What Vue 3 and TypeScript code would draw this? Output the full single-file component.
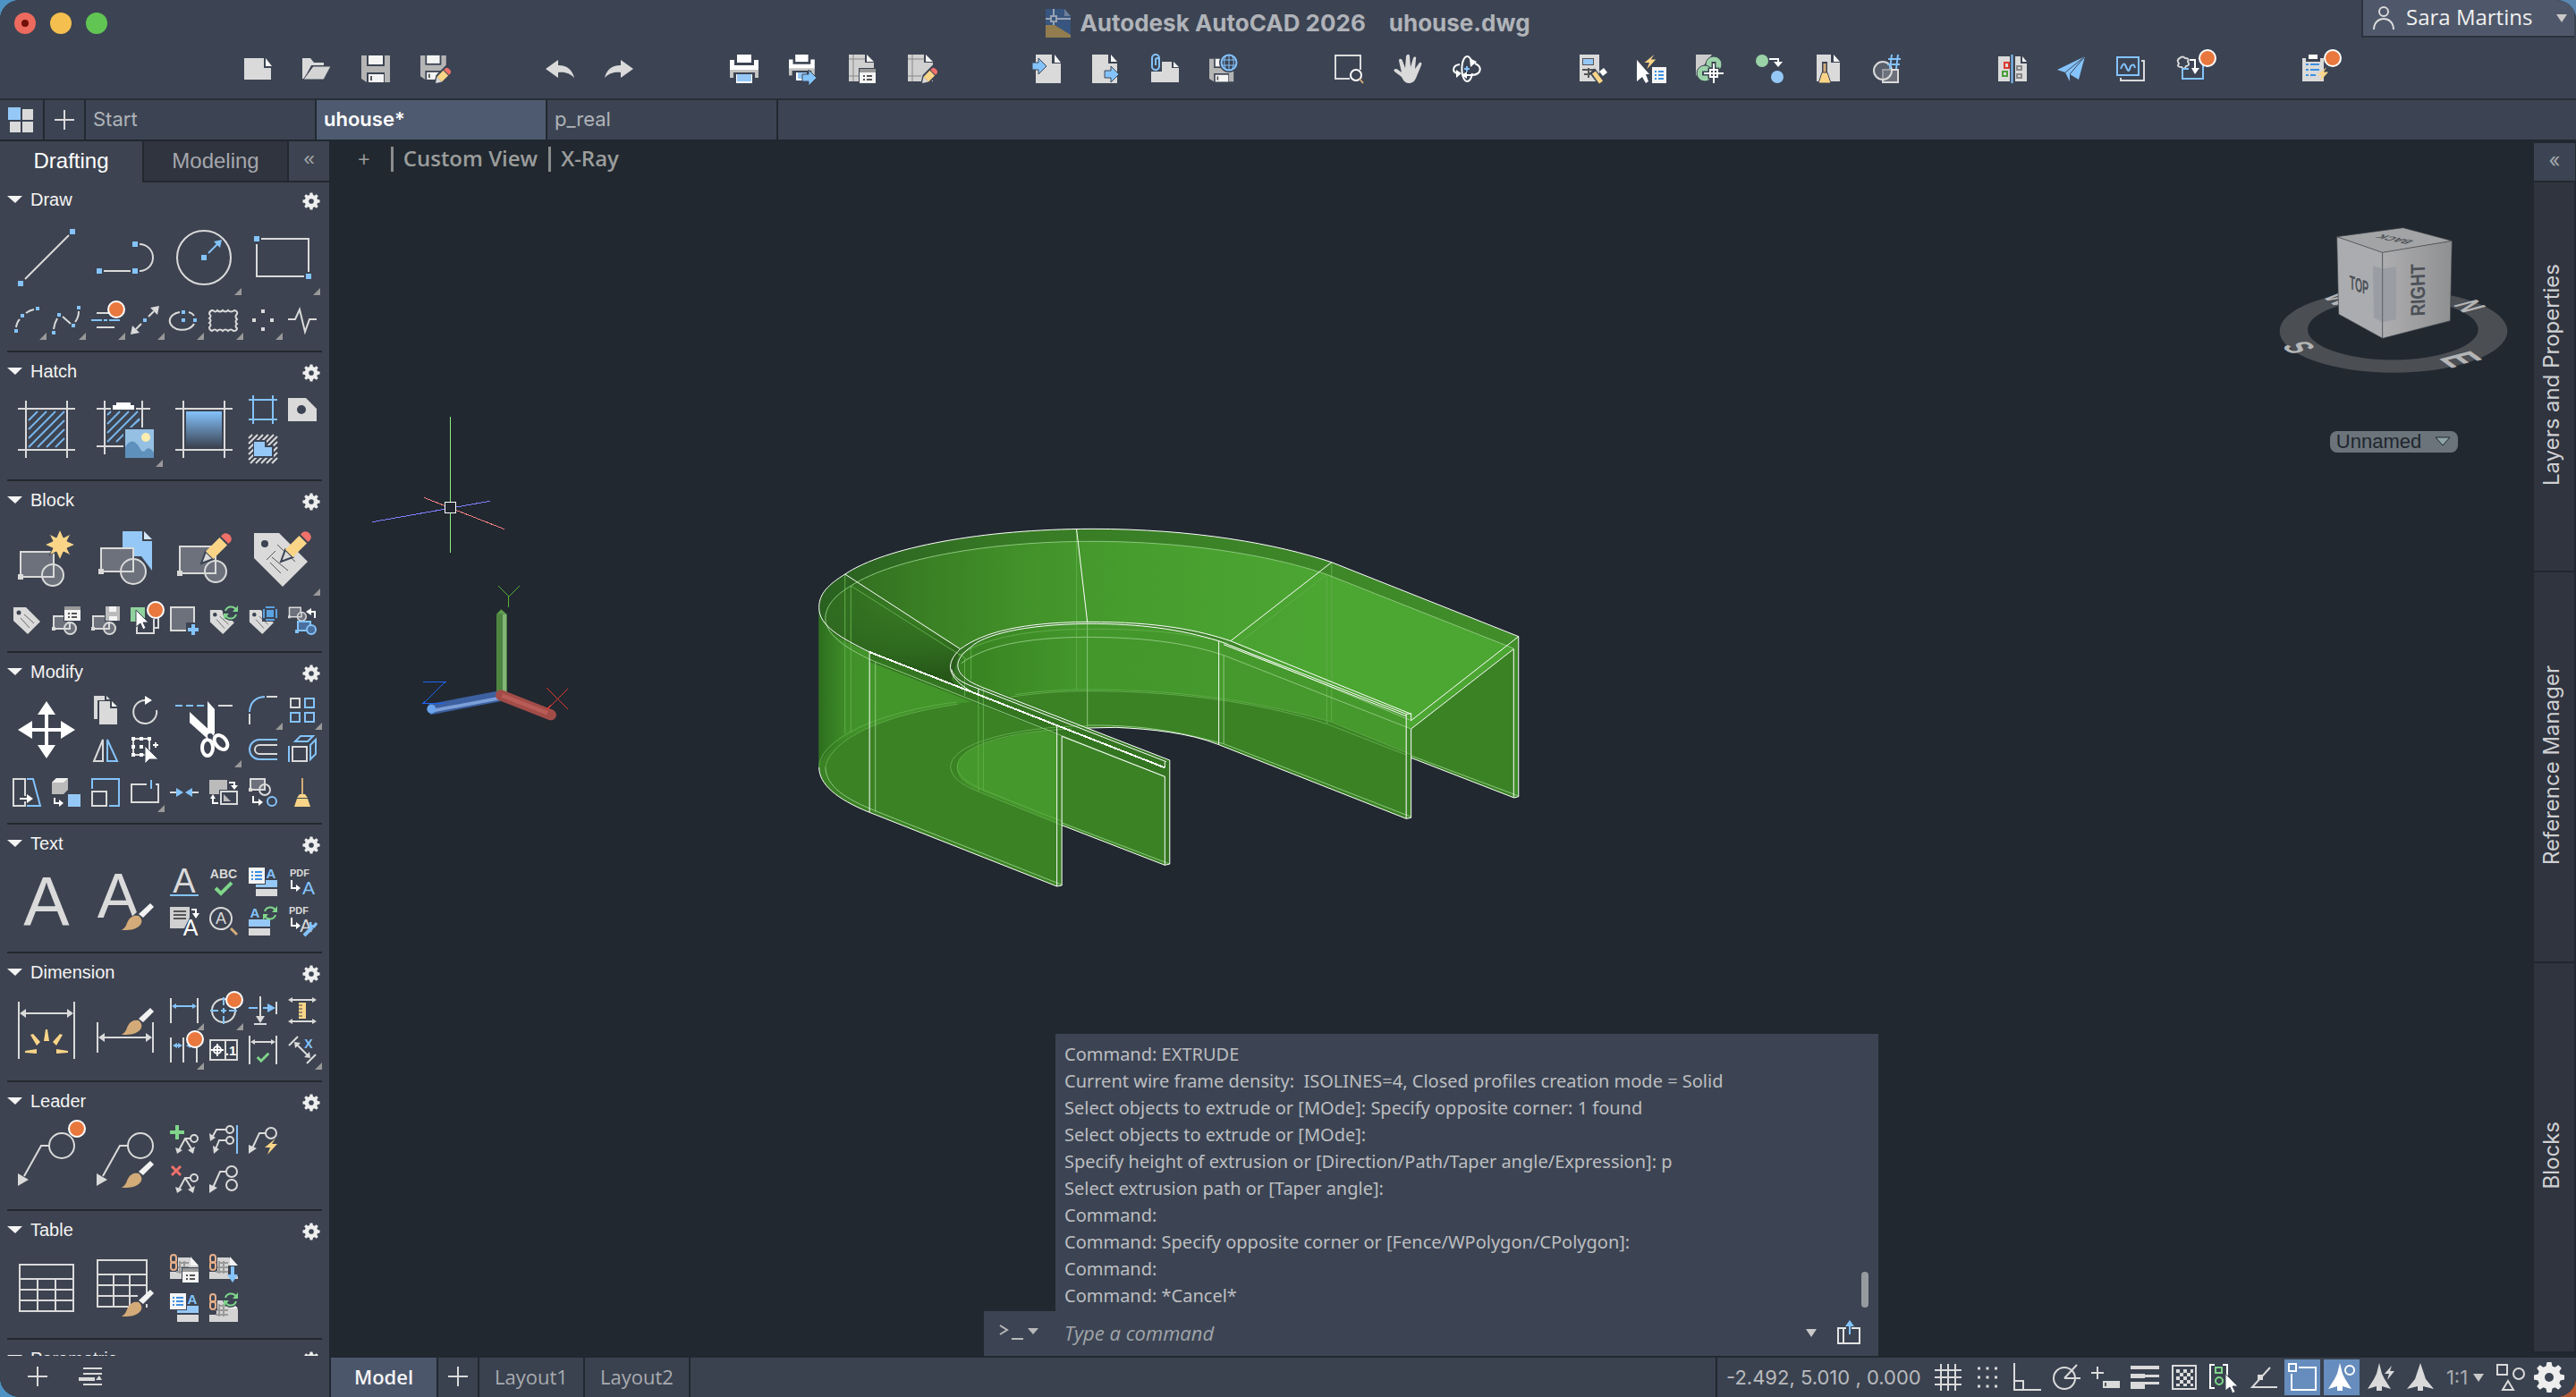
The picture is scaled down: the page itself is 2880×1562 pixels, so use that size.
<script setup lang="ts">
import { ref } from 'vue'

interface Tool { id: string; label: string; big?: boolean; menu?: boolean }
interface Section { title: string; rows: Tool[][] }

const G = '#dadada'
const B = '#84c3fc'
const W = '#ffffff'
const Y = '#fad588'
const R = '#f0716a'
const E = '#7fd68a'
const D = '#3c4453'
const F = '#6d717c'

/* Shared fragments */
const ln = (d: string, c = G, w = 2, extra = '') => `<path d="${d}" fill="none" stroke="${c}" stroke-width="${w}" ${extra}/>`
const sh = (d: string, c = G, extra = '') => `<path d="${d}" fill="${c}" ${extra}/>`
const bx = (x: number, y: number, w: number, h: number, c = G) => `<rect x="${x}" y="${y}" width="${w}" height="${h}" fill="${c}"/>`
const ob = (x: number, y: number, w: number, h: number, c = G, f = 'none', s = 2) => `<rect x="${x}" y="${y}" width="${w}" height="${h}" fill="${f}" stroke="${c}" stroke-width="${s}"/>`
const ci = (x: number, y: number, r: number, c = G, f = 'none', s = 2) => `<circle cx="${x}" cy="${y}" r="${r}" fill="${f}" stroke="${c}" stroke-width="${s}"/>`
const tx = (s: string, x: number, y: number, size: number, c = G, weight = 400) => `<text x="${x}" y="${y}" font-family="Liberation Sans, sans-serif" font-size="${size}" font-weight="${weight}" text-anchor="middle" fill="${c}">${s}</text>`
const at = (x: number, y: number, s: string, more = '') => `<g transform="translate(${x} ${y}) ${more}">${s}</g>`
const dot = (x = 28, y = 4) => ci(x, y, 9, W, '#e9783f', 2)

const brush = sh('M60 34l4 4l-12 12l-5-4z', '#f2f2f2') + sh('M28 64C34 60 33 57 35 54C38 48 43 47 47 48C52 52 51 57 47 60C42 64 36 64 28 64z', '#d3ab78')
const pencil = `<g transform="rotate(45)"><path d="M0 0L-6 -13H6z" fill="#dadada" stroke="${D}" stroke-width="2"/><rect x="-6" y="-35" width="12" height="22" fill="${Y}"/><path d="M-6 -37V-40a6 5 0 0 1 12 0V-37z" fill="${R}"/></g>`
const pencilS = `<g transform="rotate(45)"><path d="M0 1L-5 -7V-22H5V-7z" fill="${D}" stroke="${D}" stroke-width="2"/><path d="M0 0L-4 -6H4z" fill="#dadada"/><rect x="-4" y="-16" width="8" height="10" fill="${Y}"/><path d="M-4 -17V-19a4 3 0 0 1 8 0V-17z" fill="${R}"/></g>`
const cursor = sh('M0 0V19L5 15L8 22L11 20L8 14H14z', W, `stroke="${D}" stroke-width="1"`)
const refresh = ln('M-6 -2A6.500 6.500 0 0 1 6 -3M6 2A6.500 6.500 0 0 1 -6 3', E, 2) + sh('M8 -8V-1H2zM-8 8V1H-2z', E)
const list = (w: number, h: number) => bx(0, 0, w, h, '#f4f4f4') + ln(`M3 5H5M7 5H${w - 3}M3 9H5M7 9H${w - 3}M3 13H5M7 13H${w - 3}`, '#3d8fe0')
const win = bx(-1, -1, 20, 18, D) + bx(0, 0, 18, 16, '#f4f4f4') + bx(0, 0, 18, 4, '#999') + ln('M4 8H6M8 8H14M4 12H6M8 12H14', '#555')
const floppy = bx(0, 0, 16, 16, '#bbb') + bx(4, 0, 8, 6, '#f4f4f4') + bx(4, 11, 9, 5, '#f4f4f4')
const check = ln('M-9 0L-3 6L9 -6', E, 4)
const bolt = sh('M6 0L-6 10H0L-3 18L8 6H2z', Y)
const blk = ob(2, 11, 17, 14, G, F) + bx(0, 23, 4, 4) + ci(20.5, 24.5, 6.500, G, F) + ln('M15 25H20V18')
const tag = sh('M1 1H15L31 17L17 31L1 16z') + `<circle cx="7" cy="7" r="2.500" fill="${D}"/>` + ln('M9 13L19 24M13 9L24 19', '#666', 1)
const ha = (x1: number, x2: number, y: number, c = G, k = 4) => ln(`M${x1 + k} ${y}H${x2 - k}`, c) + sh(`M${x1} ${y}l${k + 2} -${k}v${2 * k}zM${x2} ${y}l-${k + 2} -${k}v${2 * k}z`, c)
const diag = (cs: number[], lo: number, hi: number) => cs.map(c => (c <= lo + hi ? `M${lo} ${c - lo}L${c - lo} ${lo}` : `M${c - hi} ${hi}L${hi} ${c - hi}`)).join('')
const frame = ln('M9 0V64M55 0V64M0 9H64M0 55H64')
const printer = bx(8, 0, 16, 9, W) + sh('M0 6H5V12H27V6H32V18H0z', W) + bx(0, 17, 32, 9, '#c4c4c4') + bx(4, 20, 24, 7, D)
const arrowR = (c = B) => sh('M0 4H7V-1L16 8L7 17V12H0z', c, `stroke="${D}" stroke-width="1"`)
const save = sh('M0 1H32V31H6L0 27z', '#b5b5b5') + bx(6, 1, 20, 12, D) + bx(8, 1, 16, 10, '#f4f4f4') + bx(6, 20, 20, 11, D) + bx(8, 22, 17, 9, '#f4f4f4') + bx(10, 24, 2, 5, '#555')
const plot = sh('M1 0H19V9H29V30H1z', '#d0d0d0') + sh('M21 0L29 8H21z', '#f4f4f4') + ln('M1 5H19M6 0V30M1 24H16', '#888', 1)
const chain = `<rect x="1" y="1" width="6" height="9" rx="3" fill="none" stroke="#e8b08a" stroke-width="2"/><rect x="1" y="9" width="6" height="9" rx="3" fill="none" stroke="#e8b08a" stroke-width="2"/>`
const sheet = sh('M0 20H8V4H22L32 14V28H0z', '#d4d4d4') + sh('M23 3L32 13H23z', '#f4f4f4') + ln('M11 10H21M7 15H21M7 20H21M11 8V22M16 8V22', '#999', 2)
const leader = ci(49, 17, 14) + ln('M35 17H26L7 51') + sh('M0 48L12 55L0 62z')
const twoLead = ci(27, 15, 4) + ln('M23 15H17L10 28M17 15L25 28') + sh('M6 25L8 32L14 28zM28 24L26 32L20 28z')
const style = bx(8, 14, 24, 8, '#95c8f6') + bx(8, 24, 24, 8)
const compass = 'M16 0L20 12L22 18L31 29L19 26V31H13V26L1 29L10 18L12 12z'
const gearPath = 'M13.500 1h5l1 4.500 3 1.200 3.800-2.500 3.500 3.500-2.500 3.800 1.200 3 4.500 1v5l-4.500 1-1.200 3 2.500 3.800-3.500 3.500-3.800-2.500-3 1.200-1 4.500h-5l-1-4.500-3-1.200-3.800 2.500-3.500-3.500 2.500-3.800-1.200-3-4.500-1v-5l4.500-1 1.200-3-2.500-3.800 3.500-3.500 3.800 2.500 3-1.200z'
const gear = `<g transform="translate(0 -2)"><path d="${gearPath}" fill="#eee"/><circle cx="16" cy="18" r="5" fill="${D}"/></g>`

const icons: Record<string, string> = {
  /* quick access */
  new: sh('M1 4H23V15H31V28H1z') + sh('M25 4L32 13H25z', '#f4f4f4'),
  open: sh('M0 4H9L13 9H24V12H10L2 27H0z') + sh('M12 13H32L24 28H1z', '#d4d4d4', `stroke="${D}"`),
  save, saveas: at(0, 0, save, 'scale(.900)') + at(17, 32, pencilS),
  undo: sh('M0 16L14 6V12C25 12 30 18 32 26C27 21 22 19 14 20V26z'),
  redo: sh('M32 16L18 6V12C7 12 2 18 0 26C5 21 10 19 18 20V26z'),
  print: printer + bx(7, 22, 18, 10, W) + bx(8, 22, 16, 8, '#95c8f6'),
  batch: at(0, 0, printer, 'scale(.900)') + bx(8, 20, 12, 9, W) + bx(10, 20, 10, 7, '#95c8f6') + at(15, 18, arrowR()),
  plotset: plot + at(13, 16, win), plotedit: plot + at(17, 32, pencilS),
  import: sh('M4 0H22V10H32V32H4z') + sh('M25 0L32 9H25z', '#f4f4f4') + at(0, 5, arrowR()),
  export: sh('M1 0H19V10H29V32H1z') + sh('M22 0L29 8H22z', '#f4f4f4') + at(15, 14, arrowR()),
  attach: sh('M1 14H13V8H24V15H32V31H1z') + sh('M26 8L32 14H26z', '#f4f4f4') + bx(0, 0, 13, 19, D) + ln('M10 7V4A4 4 0 0 0 2 4V12A4 4 0 0 0 10 14M10 14V6A2 2 0 0 0 6 6V12', B),
  saveweb: at(0, 4, save, 'scale(.850)') + `<circle cx="22" cy="9" r="11" fill="${D}"/>` + ci(22, 9, 8.500, B, 'none', 2) + ln('M22 0V18M14 6H30M14 12H30M19 1C16 6 16 12 19 17M25 1C28 6 28 12 25 17', B, 1),
  zoomwin: ln('M17 27H1V1H29V17') + ci(24, 23, 6, W) + ln('M28 27L32 32', '#d3ab78'),
  pan: sh('M9 25L1 19C-1 16 3 15 5 17L9 20L6 7C6 4 9 4 10 7L13 15L14 2C15 -1 18 -1 18 2L19 14L22 4C23 2 26 2 25 5L24 16L29 9C31 8 32 10 31 12L26 24C24 30 21 32 17 32C13 32 11 29 9 25z'),
  orbit: ln('M22 11A6 14 0 1 0 22 21', W) + ln('M8 11C0 12 -1 19 5 21M25 10C33 13 33 22 22 23H14', W) + sh('M19 4L27 8L20 14zM4 17L10 21L4 26zM16 19L10 23L16 27z', W) + ln('M16 13V19M13 16H19', B, 2),
  adcenter: bx(2, 0, 22, 30) + bx(5, 4, 13, 8, '#555') + bx(6, 5, 11, 6, '#95c8f6') + ln('M5 17H19M12 15V26M7 22H14', '#555') + at(16, 15, ln('M0 3L10 16', '#3c4453', 8) + ln('M2 5L10 16', Y, 5) + sh('M8 4L13 0L17 5L12 9z', W)),
  quick: sh('M0 6V30L6 25L10 32L13 30L10 22H14z', W) + at(17, 14, list(16, 18)) + at(14, 0, bolt, 'scale(.900)'),
  count: sh('M0 0H18L0 24z', '#ccc') + `<circle cx="20" cy="11" r="9" fill="#9bd3a8" stroke="${D}"/><circle cx="10" cy="21" r="9" fill="#9bd3a8" stroke="${D}"/>` + ob(16, 17, 8, 8, D, 'none', 5) + ln('M20 8V34M7 21H33', D, 5) + ob(16, 17, 8, 8, W) + ln('M20 10V32M9 21H31', W),
  replace: `<circle cx="8" cy="7" r="7" fill="#9bd3a8"/><circle cx="25" cy="25" r="7" fill="#95c8f6"/>` + ln('M16 5H26V9', W) + sh('M21 8H31L26 14z', W),
  purge: sh('M3 0H19V9H29V30H3z') + sh('M22 0L29 8H22z', '#f4f4f4') + ln('M12 8V24', '#3c4453', 6) + ln('M12 10V22', '#d3ab78', 3) + sh('M9 20H15L19 32H5z', Y, `stroke="${D}"`),
  hash: ob(11, 17, 17, 14, G, F) + ci(11, 18, 10, G, 'rgba(109,113,124,.6)') + ln('M21 0L19 16M28 0L26 16M17 5H31M16 11H30', B),
  compare: sh('M0 2H13V30H0z') + sh('M19 2H25V10H32V30H19z') + sh('M27 2L32 8H27z', '#f4f4f4') + ln('M15.500 0V32', B) + ob(7, 9, 5, 6, '#e03a30') + ob(5, 19, 5, 5, '#49a03a') + ob(21, 13, 5, 4, '#888') + ob(21, 22, 5, 4, '#888'),
  share: sh('M0 17L31 2L24 28L14 22V30L9 20z', B) + ln('M31 2L9 20M31 2L14 22', D, 1),
  trace: ob(5, 7, 26, 22, G, D) + bx(0, 0, 28, 26, D) + ob(1, 3, 24, 20, B) + ln('M5 16C9 6 10 12 12 16S15 17 16 13Q20 9 21 15', B),
  markup: ln('M5 4Q8 1 11 4Q16 4 14 8Q17 12 12 13Q10 18 7 14Q1 14 4 10Q1 6 5 4z', G) + ln('M15 16H8V27H31V12', B) + ln('M16 6H22V17', W) + sh('M18 15H27L22 22z', W),
  task: bx(2, 4, 24, 26) + bx(6, 4, 16, 4, D) + bx(9, 0, 10, 5, W) + ln('M6 11H9M11 11H21M6 17H9M11 17H21M6 23H9M11 23H17', '#3d8fe0') + at(24, 14, bolt, 'scale(.900)'),
  /* draw */
  line: bx(0, 58, 6, 6, B) + bx(58, 0, 6, 6, B) + ln('M8 56L57 7'),
  pline: bx(0, 44, 6, 6, B) + bx(40, 44, 6, 6, B) + bx(40, 14, 6, 6, B) + ln('M8 47H38M48 17a15 15 0 0 1 0 30'),
  circle: ci(32, 32, 30) + bx(29, 29, 6, 6, B) + ln('M37 27L47 17', B) + sh('M52 12L50 21L43 14z', B),
  rect: ln('M8 11H61V48M3 17V53H56') + bx(0, 8, 6, 6, B) + bx(58, 50, 6, 6, B),
  arc: ln('M4 24Q5 18 8 15M15 8Q19 5 24 4') + bx(26, 1, 4, 4, B) + bx(9, 9, 4, 4, B) + bx(2, 26, 4, 4, B),
  spline: ln('M2 26Q3 19 6 14M12 12L21 20M26 18Q30 13 30 6') + bx(0, 28, 4, 4, B) + bx(6, 8, 4, 4, B) + bx(22, 20, 4, 4, B) + bx(28, 0, 4, 4, B),
  mline: ln('M6 8H20M6 24H26') + ln('M0 16H12M14 16H18M20 16H32', B) + dot(),
  ray: ln('M20 12L26 6M12 20L6 26') + sh('M32 0L30 10L22 2zM0 32L2 22L10 30z') + bx(14, 14, 4, 4, B),
  ellipse: ln('M11 7A14 10 0 1 0 27 20M21 7Q25 8 27 11') + bx(13, 5, 4, 4, B) + bx(13, 14, 4, 4, B) + bx(26, 14, 4, 4, B),
  cloud: ln('M4 5q3 3 5 0q3 3 6 0q3 3 6 0q3 3 7 0q4 1 3 4q-3 3 0 6q-3 3 0 5q-3 3 0 5q0 3-4 3q-3-3-6 0q-3-3-6 0q-3-3-6 0q-3-3-6 0q-3-1-3-4q3-3 0-5q3-3 0-5q3-3 0-5q0-3 3-4z', G, 2),
  points: bx(14, 4, 4, 4) + bx(4, 14, 4, 4) + bx(24, 14, 4, 4) + bx(14, 24, 4, 4),
  zig: ln('M0 15H8L13 4L19 29L24 15H32'),
  /* hatch */
  hatch: frame + ln(diag([34, 44, 54, 64, 74, 84, 94], 12, 52), '#78b4ea'),
  hatchimg: ln('M9 0V60M51 0V30M0 9H16M44 9H60M0 51H30') + ln('M12 16L16 12M12 26L26 12M12 36L36 12M12 46L46 12M22 46L48 20M40 28L48 21', '#78b4ea') + sh('M18 10V5H22V2H38V5H42V10z', W) + bx(30, 30, 34, 34, D) + bx(32, 32, 32, 32, '#95c0e4') + `<circle cx="55" cy="41" r="5" fill="#fdeeb0"/>` + sh('M32 52C38 42 44 44 50 56L53 57C58 50 61 54 64 58V64H32z', '#5f91bd'),
  gradient: frame + `<defs><linearGradient id="gradTool" x2="0" y2="1"><stop stop-color="#84c3fc"/><stop offset="1" stop-color="#3c4453"/></linearGradient></defs><rect x="12" y="12" width="40" height="40" fill="url(#gradTool)"/>`,
  boundary: ln('M5 0V32M27 0V32M0 5H32M0 27H32', B),
  wipe: sh('M0 3H20L32 15V29H0z') + `<circle cx="15" cy="16" r="5" fill="${D}"/>`,
  super: ln(diag([4, 10, 16, 22, 28, 34, 40, 46, 52, 58], 0, 32), G, 2) + sh('M5 6H20V12H28V26H5z', D) + sh('M6 8H18V14H26V24H6z', '#95c8f6'),
  /* block */
  insert: ob(3, 25, 37, 28, G, F) + bx(0, 50, 6, 6) + ci(39, 51, 12, G, F) + ln('M40 38V53H27') + sh('M47 0L51 9L59 5L55 13L64 17L55 21L59 29L51 25L47 34L43 25L35 29L39 21L30 17L39 13L35 5L43 9z', Y, `stroke="${D}" stroke-width="1"`),
  create: sh('M29 2H51V13H62V46L50 30H29z', '#95c8f6') + sh('M53 2L62 11H53z', '#d5e9fb') + ob(5, 21, 36, 26, G, F) + bx(2, 44, 6, 6) + ci(41, 47, 14, G, F) + ln('M41 33V47H27'),
  edit: ob(5, 19, 40, 30, G, F) + bx(2, 46, 6, 6) + ci(45, 47, 12, G, F) + ln('M45 35V49H33') + at(29, 38, pencil),
  attr: sh('M0 4H28L60 36L32 64L0 32z') + `<circle cx="12" cy="16" r="4" fill="${D}"/>` + ln('M14 34L24 24M20 31L38 46M18 37L30 49M26 17L46 36', '#555', 1) + at(30, 36, pencil),
  tag, blist: blk + at(14, 0, win), bsave: blk + bx(15, 0, 17, 17, D) + at(16, 0, floppy),
  bpick: bx(0, 1, 16, 16, '#8fd39c') + ln('M7 17V30H26V14M26 24H31V12') + at(6, 4, cursor) + dot(),
  badd: ob(1, 1, 26, 26, G, F) + bx(18, 18, 14, 14, D) + ln('M26 20V32M20 26H32', B, 4),
  bsync: at(0, 3, tag, 'scale(.900)') + `<circle cx="24" cy="7" r="9" fill="${D}"/>` + at(24, 7, refresh),
  bframe: at(0, 3, tag, 'scale(.900)') + bx(15, 0, 17, 17, D) + bx(20, 4, 8, 8, '#5ba3e0') + ln('M17 3V13M31 3V13M19 1H29M19 15H29', '#5ba3e0'),
  bconv: at(0, -7, blk, 'scale(.750)') + ln('M22 6H30V13', W) + sh('M20 6L26 2V10z', W) + ob(11, 17, 14, 10, B, '#4a6f9c') + bx(8, 26, 4, 4, B) + ci(26, 26, 5, B, '#4a6f9c'),
  /* modify */
  move: ln('M32 8V56M8 32H56', W, 4) + sh('M32 0L42 15H22zM32 64L42 49H22zM0 32L16 22V42zM64 32L48 22V42z', W),
  copy: sh('M3 0H15V5H7V26H3z') + sh('M17 0L21 4H17z') + sh('M9 6H21V14H29V32H9z') + sh('M23 6L29 12H23z', '#f4f4f4'),
  rotate: ln('M16 5A13 13 0 1 0 29 16', G) + sh('M16 0L24 5L16 10z', W),
  mirror: ln('M13 5V29H3z') + ln('M18 5V29H29z', B),
  select: ob(3, 4, 18, 18, G) + bx(1, 2, 4, 4, W) + bx(10, 2, 4, 4, W) + bx(19, 2, 4, 4, W) + bx(1, 11, 4, 4, W) + bx(10, 11, 4, 4, W) + bx(1, 20, 4, 4, W) + bx(10, 20, 4, 4, W) + sh('M16 12V32L21 27H31z', W, `stroke="${D}"`) + ln('M28 8V14M25 11H31', W),
  trim: ln('M0 5H8M12 5H20M24 5H32', B) + ln('M48 5H64') + sh('M36 0L44 9V36L40 42L36 36z', W) + sh('M16 12V24L36 42L42 36z', W) + `<ellipse cx="36" cy="52" rx="6" ry="9" fill="none" stroke="#fff" stroke-width="4"/><ellipse cx="51" cy="46" rx="6" ry="9" transform="rotate(-40 51 46)" fill="none" stroke="#fff" stroke-width="4"/><circle cx="39" cy="39" r="3" fill="${D}"/>`,
  fillet: ln('M1 18Q2 2 18 1', B) + ln('M20 1H32M1 20V32'),
  array: ob(3, 3, 10, 10) + ob(19, 3, 10, 10, B) + ob(3, 19, 10, 10, B) + ob(19, 19, 10, 10, B),
  offset: ln('M32 5H12a11 11 0 0 0 0 22H32', B) + ln('M32 11H12a5 5 0 0 0 0 10H32'),
  presspull: ob(5, 13, 16, 16) + ln('M1 12V30', B) + ln('M8 7L14 1H28L22 7zM25 11L31 5V21L25 27z', B),
  stretch: ln('M14 20V1H1V31H14V26') + ln('M16 1H23L31 31H16', B) + ln('M8 23H18', W) + sh('M16 18L23 23L16 28z', W),
  scale3: sh('M0 5L5 0H18V13L13 18H0z', '#bbb') + sh('M0 5L5 0H18L13 5z', '#f0f0f0') + bx(18, 18, 14, 14, '#95c8f6') + ln('M3 22V28H9', W) + sh('M8 24L13 28L8 32z', W),
  scale: ln('M1 12V1H31V31H20', B) + ob(1, 15, 16, 16),
  break: ln('M18 7H1V27H31V7H28') + ln('M23 2V12', B),
  join: ln('M0 16H7M25 16H32') + sh('M7 11L15 16L7 21zM25 11L17 16L25 21z', B),
  order: bx(0, 2, 20, 16, '#bbb') + bx(11, 13, 21, 18, D) + ob(13, 15, 18, 14) + sh('M16 18L24 26H16z', '#bbb') + ln('M22 5H28V9M4 22V28H10', W) + sh('M24 8H32L28 13zM1 23H7L4 18z', W),
  explode: ob(2, 1, 16, 12, G, F) + bx(0, 11, 4, 4) + ci(18, 13, 6, G, 'none') + ci(26, 26, 5, B) + ln('M5 20V27H12', W) + sh('M11 23L16 27L11 31z', W),
  broom: ln('M16 0V19', '#d3ab78') + sh('M13 18H19L22 22H10z', Y) + sh('M10 23H22L25 32H7z', Y),
  /* text */
  mtext: tx('A', 32, 59, 77) , textstyle: tx('A', 24, 50, 70) + ln('M64 32L26 68', D, 9) + brush,
  stext: tx('A', 16, 28, 38) + ln('M0 31H32', B), spell: tx('ABC', 16, 12, 14, G, 700) + at(16, 23, check),
  tstyle: style + at(0, 0, bx(0, 0, 19, 19, D) + list(18, 18)) + tx('A', 25, 12, 15, B, 700),
  pdftext: tx('PDF', 13, 10, 11, G, 700) + ln('M4 14V23H10', W) + sh('M9 19L14 23L9 27z', W) + tx('A', 23, 30, 21, B),
  t2m: sh('M0 0H22V12L16 24H0z', '#d0d0d0') + ln('M4 5H18M4 9H18M4 13H18', '#555') + ln('M24 3H29V8', W) + sh('M25 7H33L29 13z', W) + tx('A', 23, 32, 25, W),
  find: ci(13, 13, 12) + tx('A', 13, 19, 18) + ln('M24 24L31 31', '#d3ab78', 3),
  tupd: tx('A', 7, 12, 15, B, 700) + bx(0, 14, 24, 8, '#95c8f6') + bx(0, 24, 24, 8) + at(24, 7, refresh),
  pdfset: tx('PDF', 12, 8, 11, G, 700) + ln('M4 12V21H10', W) + sh('M9 17L14 21L9 25z', W) + tx('A', 20, 28, 20) + ln('M18 32L27 23', B, 4) + ln('M32 18L29 22L25 21V17', B, 3),
  /* dimension */
  dim: ln('M1 0V64M63 0V64') + ha(2, 62, 13, G, 5) + sh('M29 44L31 31H33L35 44zM14 37L17 36L25 45L21 49zM50 37L47 36L39 45L43 49zM8 55V57L21 58V53zM56 55V57L43 58V53z', Y),
  dimstyle: ln('M1 23V57M63 23V57') + ha(2, 62, 40, G, 5) + at(0, -27, brush),
  linear: ln('M1 2V30M31 2V30') + ha(2, 30, 11, B, 3),
  center: ci(16, 16, 13) + ln('M16 1V10M16 13V19M16 22V31M1 16H10M13 16H19M22 16H31', B) + dot(),
  ordinate: ln('M13 0V24M6 31H20M31 6V20') + sh('M8 22H18L13 30z') + ln('M0 13H10M16 13H22', B) + sh('M21 8L30 13L21 18z', B),
  ruler: ha(0, 32, 4, G, 3) + ha(0, 32, 28, G, 3) + bx(12, 7, 8, 18, Y) + ln('M12 10H16M12 14H16M12 18H16M12 22H16', D, 1),
  cont: ln('M1 2V30M15 2V30M30 12V30') + ha(3, 14, 11, B, 3) + ha(18, 30, 11, B, 3) + dot(),
  tol: ob(1, 5, 30, 22) + ln('M18 5V27') + ci(9, 16, 4, W) + ln('M9 9V23M2 16H16', W) + tx('.1', 24, 22, 15, W, 700),
  dimchk: ln('M1 0V32M31 0V32') + ha(2, 30, 7, G, 3) + at(16, 24, check, 'scale(.700)'),
  jog: ln('M1 11L11 1M21 31L31 21M9 9L23 23') + sh('M7 7L14 8L8 14zM25 25L18 24L24 18z') + tx('X', 23, 14, 14, B, 700),
  /* leader */
  leader: leader + dot(66, -2), leaderstyle: leader + brush,
  ladd: ln('M8 0V16M0 8H16', E, 4) + twoLead, ldel: ln('M2 2L12 12M12 2L2 12', R, 3) + twoLead,
  lalign: ci(23, 5, 4) + ci(23, 17, 4) + ln('M19 5H8L3 14M19 17H11L7 27') + sh('M0 9L1 18L7 14zM4 23L5 32L11 27z') + ln('M31 0V32', B),
  lbolt: ci(25, 9, 6) + ln('M19 9H12L4 26') + sh('M0 22V32L9 26z') + at(24, 15, bolt),
  lcoll: ci(25, 8, 6) + ci(25, 23, 6) + ln('M19 8H12L4 26') + sh('M0 22V32L9 26z'),
  /* table */
  table: ob(2, 6, 60, 52) + ln('M2 22H62M2 34H62M2 46H62M22 22V58M42 22V58'),
  tablestyle: ln('M48 53H1V1H56V40M56 50V54M1 17H56M1 29H56M1 41H46M19 17V53M37 17V53') + brush,
  tlink: sheet + bx(0, 0, 9, 19, D) + chain + at(14, 16, win),
  tdown: sheet + bx(0, 0, 9, 19, D) + chain + bx(21, 13, 11, 12, D) + ln('M26 14V25', B, 4) + sh('M20 23H32L26 32z', B),
  tcell: style + bx(0, 0, 19, 19, D) + list(18, 18) + tx('A', 25, 12, 15, B, 700),
  trefresh: at(0, 4, sheet) + bx(0, 0, 9, 19, D) + chain + `<circle cx="24" cy="7" r="9" fill="${D}"/>` + at(24, 7, refresh),
  /* status */
  grid: ln('M8 1V31M16 1V31M24 1V31M1 8H31M1 16H31M1 24H31'),
  snap: ln('M5 6H27M5 16H27M5 26H27', G, 3, 'stroke-dasharray="3 6.500"'),
  ortho: ln('M2 0V30H32M2 20H12V30'),
  polar: ci(14, 17, 12) + ln('M14 17H32M14 17L28 2'),
  dyn: ln('M7 4V18M0 11H14') + bx(13, 20, 19, 8) + bx(15, 22, 2, 4, '#555'),
  lwt: bx(0, 3, 32, 4) + bx(0, 12, 16, 5) + bx(14, 13, 18, 3) + bx(0, 21, 16, 8) + bx(14, 21, 18, 3),
  trans: ob(3, 3, 26, 26) + bx(7, 7, 4, 4) + bx(15, 7, 4, 4) + bx(23, 7, 3, 4) + bx(11, 11, 4, 4) + bx(19, 11, 4, 4) + bx(7, 15, 4, 4) + bx(15, 15, 4, 4) + bx(23, 15, 3, 4) + bx(11, 19, 4, 4) + bx(19, 19, 4, 4) + bx(7, 23, 4, 3) + bx(15, 23, 4, 3) + bx(23, 23, 3, 3),
  cycle: ln('M6 2H1V28H6M15 2H20V16', W) + ob(7, 5, 7, 6, E) + ci(11, 20, 4, E) + at(18, 12, cursor),
  ang: ln('M24 5L4 27H32') + bx(10, 13, 6, 6),
  osnap: ob(1, 1, 8, 8, W) + ln('M12 5H31V30H4V12', W),
  annovis: sh('M14 0L17 12L20 18L27 29L17 26V31H11V26L1 29L8 18L11 12z', W) + ci(25, 8, 5, W),
  annoauto: sh('M14 0L17 12L20 18L27 29L17 26V31H11V26L1 29L8 18L11 12z') + sh('M28 3L20 12H25L23 19L31 9H26z'),
  annoscale: sh(compass),
  iso: ob(2, 2, 11, 11) + ci(26, 12, 6) + ln('M14 20L20 30H8z'),
  gear
}

const T = (id: string, label: string, menu = false): Tool => ({ id, label, menu })
const L = (id: string, label: string, menu = false): Tool => ({ id, label, menu, big: true })

const quickTools: Tool[][] = [
  [T('new', 'New'), T('open', 'Open'), T('save', 'Save'), T('saveas', 'Save As')],
  [T('undo', 'Undo'), T('redo', 'Redo')],
  [T('print', 'Print'), T('batch', 'Batch print'), T('plotset', 'Page setup'), T('plotedit', 'Edit plot style')],
  [T('import', 'Import'), T('export', 'Export'), T('attach', 'Attach'), T('saveweb', 'Save to web')],
  [T('zoomwin', 'Zoom'), T('pan', 'Pan'), T('orbit', 'Orbit')],
  [T('adcenter', 'Match properties'), T('quick', 'Quick select'), T('count', 'Count'), T('replace', 'Replace'), T('purge', 'Purge'), T('hash', 'Block count')],
  [T('compare', 'Compare'), T('share', 'Share'), T('trace', 'Trace'), T('markup', 'Markup import')],
  [T('task', 'Activity insights')]
]
const badged = ['markup', 'task']

const sections: Section[] = [
  { title: 'Draw', rows: [
    [L('line', 'Line'), L('pline', 'Polyline'), L('circle', 'Circle', true), L('rect', 'Rectangle', true)],
    [T('arc', 'Arc', true), T('spline', 'Spline', true), T('mline', 'Centerline', true), T('ray', 'Construction line', true), T('ellipse', 'Ellipse', true), T('cloud', 'Revision cloud', true), T('points', 'Point', true), T('zig', 'Break line')]] },
  { title: 'Hatch', rows: [[L('hatch', 'Hatch'), L('hatchimg', 'Image hatch', true), L('gradient', 'Gradient'), T('boundary', 'Boundary'), T('wipe', 'Wipeout'), T('super', 'Super hatch')]] },
  { title: 'Block', rows: [
    [L('insert', 'Create block'), L('create', 'Insert block'), L('edit', 'Edit block'), L('attr', 'Edit attribute', true)],
    [T('tag', 'Define attribute'), T('blist', 'Attribute manager'), T('bsave', 'Write block'), T('bpick', 'Smart blocks'), T('badd', 'Base point'), T('bsync', 'Sync attributes'), T('bframe', 'Attribute display'), T('bconv', 'Replace block')]] },
  { title: 'Modify', rows: [
    [L('move', 'Move'), T('copy', 'Copy'), T('rotate', 'Rotate'), L('trim', 'Trim', true), T('fillet', 'Fillet', true), T('array', 'Array', true), T('mirror', 'Mirror'), T('select', 'Select similar'), T('offset', 'Offset'), T('presspull', 'Copy nested')],
    [T('stretch', 'Stretch'), T('scale3', 'Change space'), T('scale', 'Scale'), T('break', 'Break', true), T('join', 'Join'), T('order', 'Draw order'), T('explode', 'Explode'), T('broom', 'Overkill')]] },
  { title: 'Text', rows: [[L('mtext', 'Multiline text'), L('textstyle', 'Text style'), T('stext', 'Single line text'), T('spell', 'Spell check'), T('tstyle', 'Field'), T('pdftext', 'PDF to text'), T('t2m', 'Text to mtext'), T('find', 'Find text'), T('tupd', 'Update field'), T('pdfset', 'PDF text settings')]] },
  { title: 'Dimension', rows: [[L('dim', 'Dimension'), L('dimstyle', 'Dimension style'), T('linear', 'Linear', true), T('center', 'Center mark', true), T('ordinate', 'Ordinate'), T('ruler', 'Adjust space'), T('cont', 'Continue', true), T('tol', 'Tolerance'), T('dimchk', 'Inspect'), T('jog', 'Oblique', true)]] },
  { title: 'Leader', rows: [[L('leader', 'Multileader'), L('leaderstyle', 'Leader style'), T('ladd', 'Add leader'), T('lalign', 'Align leaders'), T('lbolt', 'Quick leader'), T('', ''), T('ldel', 'Remove leader'), T('lcoll', 'Collect leaders')]] },
  { title: 'Table', rows: [[L('table', 'Table'), L('tablestyle', 'Table style'), T('tlink', 'Data link'), T('tdown', 'Download source'), T('', ''), T('', ''), T('tcell', 'Cell field'), T('trefresh', 'Update link')]] },
  { title: 'Parametric', rows: [[]] }
]

const statusTools: Tool[] = [
  T('grid', 'Grid'), T('snap', 'Snap'), T('ortho', 'Ortho'), T('polar', 'Polar tracking'), T('dyn', 'Dynamic input'), T('lwt', 'Lineweight'),
  T('trans', 'Transparency'), T('cycle', 'Selection cycling'), T('ang', 'Angle'), T('osnap', 'Object snap'), T('annovis', 'Annotation visibility'), T('annoauto', 'Auto scale'), T('annoscale', 'Annotation scale')
]
const active = ['osnap', 'annovis']

const log = [
  'Command: EXTRUDE',
  'Current wire frame density:  ISOLINES=4, Closed profiles creation mode = Solid',
  'Select objects to extrude or [MOde]: Specify opposite corner: 1 found',
  'Select objects to extrude or [MOde]:',
  'Specify height of extrusion or [Direction/Path/Taper angle/Expression]: p',
  'Select extrusion path or [Taper angle]:',
  'Command:',
  'Command: Specify opposite corner or [Fence/WPolygon/CPolygon]:',
  'Command:',
  'Command: *Cancel*'
]
const docs = ['Start', 'uhouse*', 'p_real']
const doc = ref('uhouse*')
const command = ref('')
const palettes = ['Layers and Properties', 'Reference Manager', 'Blocks']
</script>

<template>
  <div class="window">
    <header class="top">
      <div class="titlebar">
        <div class="lights"><button class="light red" aria-label="Close"></button><button class="light amber" aria-label="Minimize"></button><button class="light green" aria-label="Zoom"></button></div>
        <h1 class="title">
          <svg width="28" height="32" viewBox="0 0 28 32"><path d="M0 0H21L28 8V32H0z" fill="#38557f" /><path d="M21 0L28 8H21z" fill="#6d7f98" /><path d="M0 18H10L28 29V32H0z" fill="#937d4e" /><path d="M9 0V18M0 11H28" stroke="#98a2b0" stroke-width="2" /><rect x="6" y="8" width="6" height="6" fill="#38557f" stroke="#98a2b0" stroke-width="2" /></svg>
          <span>Autodesk AutoCAD 2026</span><span class="file">uhouse.dwg</span>
        </h1>
        <button class="user">
          <svg width="26" height="28" viewBox="0 0 26 28"><circle cx="13" cy="7" r="5" fill="none" stroke="#dadada" stroke-width="2" /><path d="M2 27C2 11 24 11 24 27" fill="none" stroke="#dadada" stroke-width="2" /></svg>
          <span>Sara Martins</span><i class="caret"></i>
        </button>
      </div>
      <nav class="toolbar">
        <div v-for="(g, i) in quickTools" :key="i" class="group">
          <button v-for="t in g" :key="t.id" class="quick" :aria-label="t.label">
            <svg width="32" height="32" viewBox="0 0 32 32" v-html="icons[t.id]"></svg>
            <i v-if="badged.includes(t.id)" class="badge"></i>
          </button>
        </div>
      </nav>
    </header>

    <nav class="doctabs">
      <button class="sq" aria-label="Overview"><svg width="30" height="30" viewBox="0 0 30 30"><rect x="0" y="1" width="14" height="14" fill="#95c8f6" /><path d="M16 3H28V15H16zM2 17H14V29H2zM16 17H28V29H16z" fill="#dadada" /></svg></button>
      <button class="sq plus" aria-label="New drawing"><svg width="22" height="22" viewBox="0 0 22 22"><path d="M11 0V22M0 11H22" stroke="#dadada" stroke-width="2" /></svg></button>
      <button v-for="d in docs" :key="d" class="doc" :class="{ on: doc === d }" @click="doc = d">{{ d }}</button>
    </nav>

    <div class="body">
      <aside class="side">
        <div class="modes"><button class="mode on">Drafting</button><button class="mode">Modeling</button><button class="fold">«</button></div>
        <div class="sections">
          <section v-for="s in sections" :key="s.title" class="section">
            <h2 class="head">
              <svg width="18" height="10" viewBox="0 0 18 10"><path d="M0 1H17L9 9z" fill="#f4f4f4" /></svg>
              <span>{{ s.title }}</span>
              <button class="cog" :aria-label="s.title + ' settings'"><svg width="18" height="18" viewBox="0 0 32 32" v-html="icons.gear"></svg></button>
            </h2>
            <div v-for="(r, i) in s.rows" :key="i" class="tools">
              <template v-for="(t, j) in r" :key="j">
                <span v-if="!t.id" class="tool"></span>
                <button v-else class="tool" :class="{ big: t.big, menu: t.menu }" :aria-label="t.label">
                  <svg :width="t.big ? 64 : 32" :height="t.big ? 64 : 32" :viewBox="t.big ? '0 0 64 64' : '0 0 32 32'" v-html="icons[t.id]"></svg>
                </button>
              </template>
            </div>
          </section>
        </div>
        <div class="sidefoot">
          <button aria-label="Add"><svg width="22" height="22" viewBox="0 0 22 22"><path d="M11 0V22M0 11H22" stroke="#dadada" stroke-width="2" /></svg></button>
          <button aria-label="Arrange"><svg width="28" height="22" viewBox="0 0 28 22"><path d="M6 2H27M6 8H27M6 20H27" stroke="#dadada" stroke-width="2" /><path d="M1 12H19V16H1zM20 15L24 10L27 15z" fill="#dadada" /></svg></button>
        </div>
      </aside>

      <div class="work">
        <div class="stage">
          <main class="canvas">
            <div class="viewctl"><button class="vplus">+</button><button>Custom View</button><button>X-Ray</button></div>

            <svg class="cross" width="300" height="380" viewBox="0 0 900 1140">
              <g shape-rendering="crispEdges">
                <path d="M310 78V533" stroke="#90f080" stroke-width="3" />
                <path d="M48 431L443 361" stroke="#8080ff" stroke-width="3" /><path d="M222 349L492 455" stroke="#f08080" stroke-width="3" />
                <rect x="292" y="364" width="37" height="37" fill="#212830" stroke="#fff" stroke-width="3" />
                <path d="M472 646L507 681L542 646M506 681V717" fill="none" stroke="#58b035" stroke-width="3" />
              </g>
              <rect x="465" y="740" width="36" height="270" fill="#4f8542" /><rect x="486" y="740" width="12" height="260" fill="#83b478" /><path d="M465 740L481 724L500 740z" fill="#5fa04c" />
              <path d="M240 1060L475 1015" stroke="#3c60a0" stroke-width="36" /><path d="M250 1064L475 1022" stroke="#7d9fd8" stroke-width="11" /><circle cx="247" cy="1058" r="15" fill="#6aa5ee" />
              <path d="M480 1012L648 1078" stroke="#a24c48" stroke-width="36" stroke-linecap="round" /><path d="M484 1013L636 1072" stroke="#b85c57" stroke-width="14" />
              <path shape-rendering="crispEdges" d="M220 968H293L220 1039H291" fill="none" stroke="#1f64f0" stroke-width="3" /><path shape-rendering="crispEdges" d="M634 988L704 1058M704 991L634 1060" stroke="#e03a30" stroke-width="3" />
            </svg>

            <svg class="model" width="860" height="460" viewBox="0 0 1568 1380" preserveAspectRatio="none">
              <defs>
                <linearGradient id="roof" x1="78" y1="0" x2="1100" y2="0" gradientUnits="userSpaceOnUse"><stop stop-color="#2f6a20" /><stop offset=".2" stop-color="#3a7f24" /><stop offset=".4" stop-color="#42922a" /><stop offset=".6" stop-color="#479d2e" /><stop offset="1" stop-color="#4ca632" /></linearGradient>
                <linearGradient id="rim" x1="65" y1="0" x2="1490" y2="0" gradientUnits="userSpaceOnUse"><stop stop-color="#296020" /><stop offset=".3" stop-color="#387c25" /><stop offset="1" stop-color="#418e2a" /></linearGradient>
                <linearGradient id="wall" x1="65" y1="0" x2="180" y2="0" gradientUnits="userSpaceOnUse"><stop stop-color="#2e6e1f" /><stop offset=".5" stop-color="#3f8f28" /><stop offset="1" stop-color="#43962a" /></linearGradient>
                <linearGradient id="inner" x1="340" y1="0" x2="900" y2="0" gradientUnits="userSpaceOnUse"><stop stop-color="#378021" /><stop offset=".45" stop-color="#43972b" /><stop offset="1" stop-color="#46992c" /></linearGradient>
                <linearGradient id="shade" x1="260" y1="600" x2="200" y2="330" gradientUnits="userSpaceOnUse"><stop stop-color="#265618" /><stop offset="1" stop-color="#2f6a20" stop-opacity="0" /></linearGradient>
              </defs>
              <path fill="url(#rim)" d="M65 358C65 310 85 280 118 246C200 155 400 95 620 94C830 94 1000 145 1110 206L1491 455V992L1482 996L1272 862V1063L1262 1066L880 818C820 778 740 765 670 760L612 762L780 870V1218L770 1222L560 1088V1290L550 1293L168 1045C100 1000 65 950 65 893z" />
              <path fill="#3b8225" d="M168 507L770 895V1222L560 1088V1290L550 1293L168 1045C100 1000 65 950 65 893V370C70 420 120 470 168 507z" />
              <path fill="url(#wall)" d="M65 370C70 430 120 470 168 507L390 652V672C250 690 90 780 65 890z" />
              <path fill="url(#roof)" d="M345 600L180 515C110 470 78 440 78 395C78 350 100 315 130 285C220 190 420 136 620 136C830 136 1000 190 1100 247L1481 495L1272 765L904 472C840 435 760 406 612 406C480 408 400 440 353 497C335 525 330 565 345 600z" />
              <path fill="url(#inner)" d="M375 490C400 450 480 412 612 412C720 412 800 430 880 470L1262 715V848L1110 745C1000 690 830 632 612 633C540 633 500 645 455 655L400 627C345 590 335 545 375 490z" />
              <path fill="#3b8225" d="M1272 765L1481 497V995L1272 862zM455 655C500 645 540 633 612 633C830 632 1000 690 1110 740L1272 850V1063L1262 1066L880 818C820 778 740 760 612 760z" />
              <path fill="#45982b" d="M346 893C350 850 380 800 550 766V1080L390 970C360 950 346 930 346 893z" />
              <path fill="#347521" d="M390 640L780 870V1218L770 1222V925L550 785L168 540V507z" />
              <path fill="url(#shade)" d="M78 400C90 340 120 290 130 285L353 497L335 600L345 620L168 505C110 465 90 440 78 400z" />
              <g class="faint">
                <path d="M118 246V780M130 285V775M590 95V633M1110 206V742M1100 247V748M390 652V975M400 627V970M362 530V655M375 490V600" />
                <path d="M65 890C70 800 180 710 345 675M78 893C90 800 190 720 348 682M465 650C520 637 570 633 612 633C830 632 1000 690 1110 742L1270 850M455 658C520 642 570 638 612 638C830 638 990 690 1100 748L1262 852" />
                <path d="M612 755C500 755 335 800 333 893C335 930 360 955 390 975L560 1088M580 765C480 770 348 810 347 893C348 930 375 950 400 970L560 1075" />
                <path d="M900 478C800 435 700 430 612 430C480 432 395 465 350 520M130 285L365 530M1100 247L920 478" />
              </g>
              <g class="semi">
                <path d="M770 925L180 540C110 490 78 440 78 395C78 350 100 315 130 285C220 190 420 136 620 136C830 136 1000 190 1100 247L1481 495" />
                <path d="M1272 765L890 518C820 480 740 458 612 457C480 458 400 490 355 545M1272 737L904 485M180 540V1043M890 518V815M612 406V760" />
                <path d="M78 893C80 960 120 1000 180 1040L560 1288M560 1080L780 1218M612 753C750 750 830 790 890 815L1272 1060M1272 855L1491 990" />
              </g>
              <g class="edge">
                <path d="M65 358C65 310 85 280 118 246C200 155 400 95 620 94C830 94 1000 145 1110 206L1491 455" />
                <path d="M168 507C110 460 65 420 65 358" /><path stroke-width="2" d="M168 507L770 895" />
                <path d="M1262 715L880 470C800 430 720 412 612 412C480 415 400 450 375 490C345 525 340 560 360 590C375 612 388 618 400 627L780 870" />
                <path d="M1272 715L904 470C840 435 760 406 612 406C480 408 400 440 353 497C325 540 330 575 345 600C355 620 370 635 390 652M335 565C340 600 365 615 390 630L773 875M1262 722L890 482" />
                <path d="M118 246L353 497M590 95L612 406M1110 206L904 470M1491 455L1272 737M1481 497L1272 765" />
                <path d="M168 507V1045M550 756V1293M560 790V1290M770 925V1222M780 870V1218M880 470V818M1262 715V1066M1272 765V1063M1262 715L1272 713V737M770 895V875M1481 497V995M1491 455V992M390 652V630" />
                <path d="M65 893C65 950 100 1000 168 1045L550 1293L560 1290M560 1088L770 1222L780 1218M612 762L670 760C740 765 820 778 880 818L1262 1066L1272 1063M1272 862L1482 996L1491 992M560 790L770 925" />
              </g>
            </svg>

            <svg class="cube" width="270" height="180" viewBox="120 300 810 540">
              <defs><linearGradient id="face"><stop stop-color="#adadb0" /><stop offset="1" stop-color="#8f9092" /></linearGradient></defs>
              <path fill="#4b4e53" fill-rule="evenodd" d="M146 661A382 139 0 1 0 910 661A382 139 0 1 0 146 661zM240 655A286 102 0 1 0 812 655A286 102 0 1 0 240 655z" />
              <g class="cardinal">
                <text transform="matrix(.780 .570 -1.600 .420 288 545)" font-size="66">W</text>
                <text transform="matrix(.780 .570 -1.600 .420 725 572)" font-size="70">N</text>
                <text transform="matrix(.780 .570 -1.600 .420 150 712)" font-size="75">S</text>
                <text transform="matrix(.780 .570 -1.600 .420 677 751)" font-size="94">E</text>
              </g>
              <path d="M338 344L560 314L724 358L491 397z" fill="#a3a4a6" /><path d="M338 344L491 397V685L344 604z" fill="#abacaf" /><path d="M491 397L724 358L718 626L491 685z" fill="url(#face)" />
              <path d="M459 442L491 451L537 445V621L491 631L462 616z" fill="#9a9da4" />
              <path d="M338 344L491 397L724 358M491 397V685M338 344L344 604L491 685L718 626L724 358L560 314z" fill="none" stroke="#3e4247" stroke-width="2" />
              <g class="facename">
                <text transform="matrix(.480 .170 0 1 380 518)" font-size="66">TOP</text>
                <text transform="matrix(0 -.830 1 -.050 634 609)" font-size="68">RIGHT</text>
                <text transform="matrix(-.980 -.200 1 -.420 598 358)" font-size="38">BACK</text>
              </g>
            </svg>
            <button class="ucs">Unnamed<svg width="20" height="12" viewBox="0 0 20 12"><path d="M2 1H18L10 10z" fill="#8fa3a8" stroke="#20272f" /></svg></button>

            <section class="console">
              <div class="log"><p v-for="(l, i) in log" :key="i">{{ l }}</p><i class="thumb"></i></div>
              <div class="prompt">
                <button class="sigil" aria-label="Recent commands"><svg width="46" height="20" viewBox="0 0 46 20"><path d="M1 2L9 7L1 12" fill="none" stroke="#b9b9b9" stroke-width="2" /><path d="M14 17H27" stroke="#b9b9b9" stroke-width="2" /><path d="M32 5H44L38 12z" fill="#b9b9b9" /></svg></button>
                <input v-model="command" placeholder="Type a command" aria-label="Command" />
                <i class="caret"></i>
                <button aria-label="Open history"><svg width="26" height="28" viewBox="0 0 26 28"><path d="M10 9H1V26H25V9H16M7 9V26" fill="none" stroke="#e4e4e4" stroke-width="2" /><path d="M14 16V5" stroke="#84c3fc" stroke-width="2" /><path d="M9 7L14 0L19 7z" fill="#84c3fc" /></svg></button>
              </div>
            </section>
          </main>
          <aside class="dock">
            <button class="fold">«</button>
            <button v-for="p in palettes" :key="p" class="palette"><span>{{ p }}</span></button>
          </aside>
        </div>

        <footer class="status">
          <button class="sheet on">Model</button>
          <button class="addsheet" aria-label="New layout"><svg width="22" height="22" viewBox="0 0 22 22"><path d="M11 0V22M0 11H22" stroke="#dadada" stroke-width="2" /></svg></button>
          <button class="sheet">Layout1</button><button class="sheet">Layout2</button>
          <div class="readout">
            <output class="coords">-2.492, 5.010 , 0.000</output>
            <button v-for="t in statusTools" :key="t.id" class="stat" :class="{ on: active.includes(t.id) }" :aria-label="t.label"><svg width="32" height="32" viewBox="0 0 32 32" v-html="icons[t.id]"></svg></button>
            <button class="ratio">1:1<i class="caret"></i></button>
            <button class="stat" aria-label="Isolate"><svg width="32" height="32" viewBox="0 0 32 32" v-html="icons.iso"></svg></button>
            <button class="stat" aria-label="Settings"><svg width="32" height="32" viewBox="0 0 32 32" v-html="icons.gear"></svg></button>
          </div>
        </footer>
      </div>
    </div>
  </div>
</template>

<style>
html, body, #app { height: 100%; }
body { margin: 0; background: linear-gradient(100deg, #4f93c4 50%, #4f8cc0 90%, #b8582f); }
</style>

<style scoped>
.window { height: 100vh; display: flex; flex-direction: column; background: #212830; border-radius: 22px; overflow: hidden; font-family: Inter, sans-serif; color: #b4b6ba; }
button { border: 0; padding: 0; margin: 0; background: none; color: inherit; font: inherit; display: flex; align-items: center; justify-content: center; }
svg { overflow: visible; display: block; flex: none; }
h1, h2, p { margin: 0; font-weight: 400; }
.caret { border: 6px solid transparent; border-top: 9px solid #c9c9c9; border-bottom: 0; }

.top { background: #3c4453; border-bottom: 2px solid #272e38; height: 110px; flex: none; }
.titlebar { height: 52px; display: grid; grid-template-columns: 1fr auto 1fr; align-items: center; }
.lights { display: flex; gap: 16px; padding-left: 16px; }
.light { width: 24px; height: 24px; border-radius: 50%; }
.red { background: #ed6a5e; }
.red::after { content: ''; width: 8px; height: 8px; border-radius: 50%; background: #720f08; }
.amber { background: #f5bf4f; }
.green { background: #61c554; }
.title { display: flex; align-items: center; gap: 10px; font: 700 26px/50px Inter, sans-serif; color: #b0b3b9; }
.file { margin-left: 16px; }
.user { justify-self: end; align-self: start; height: 40px; width: 226px; margin-right: 2px; background: #4f586a; border: 2px solid #2b323d; border-top: 0; border-right: 0; gap: 12px; justify-content: flex-start; padding-left: 10px; box-sizing: content-box; font: 24px/40px "Open Sans", sans-serif; color: #f0f0f0; }
.user span { padding-bottom: 2px; }
.user .caret { margin-left: auto; margin-right: 8px; }
.toolbar { height: 50px; display: flex; justify-content: center; align-items: center; gap: 108px; padding-right: 4px; }
.group { display: flex; gap: 34px; }
.quick { position: relative; width: 32px; height: 32px; }
.badge { position: absolute; left: 26px; top: -6px; width: 20px; height: 20px; border-radius: 50%; background: #e9783f; border: 2px solid #fff; box-sizing: border-box; }

.doctabs { display: flex; flex: none; height: 44px; background: #3c4453; border-bottom: 2px solid #20272f; }
.doctabs button { border-right: 2px solid #212830; }
.sq { width: 50px; }
.plus { width: 46px; }
.doctabs .doc { width: 258px; justify-content: flex-start; padding: 0 0 2px 8px; font-size: 22px; color: #b0b3b9; }
.doctabs .doc.on { background: #4e5a6f; color: #fff; font-weight: 600; }

.body { flex: 1; min-height: 0; display: flex; }
.side { width: 368px; flex: none; background: #3d4350; display: flex; flex-direction: column; }
.modes { display: flex; height: 44px; flex: none; font: 24px/44px "Liberation Sans", sans-serif; }
.mode { width: 162px; height: 46px; background: #30343f; color: #a5a7ac; border-left: 2px solid #23282f; border-bottom: 2px solid #23282f; }
.mode.on { background: none; border-color: transparent; border-left: 0; color: #fff; width: 159px; }
.fold { flex: 1; height: 46px; font-size: 22px; color: #a5a7ac; border-left: 2px solid #23282f; border-bottom: 2px solid #23282f; padding-bottom: 4px; }
.sections { flex: 1; min-height: 0; overflow: hidden; }
.section { margin: 0 8px; padding-bottom: 12px; border-bottom: 2px solid #23282f; }
.head { height: 42px; display: flex; align-items: center; font: 20px/42px "Liberation Sans", sans-serif; color: #f4f4f4; }
.head span { margin-left: 8px; }
.cog { margin: 4px 3px 0 auto; }
.tools { display: grid; grid-template-columns: repeat(8, 44px); grid-auto-rows: 44px; }
.tools + .tools { margin-top: 4px; }
.tool { position: relative; width: 44px; height: 44px; }
.tool.big { grid-column: span 2; grid-row: span 2; width: 88px; height: 88px; }
.menu::after { content: ''; position: absolute; right: 0; bottom: 0; border-left: 8px solid transparent; border-bottom: 8px solid #999; }
.big.menu::after { right: 2px; bottom: 2px; }
.sidefoot { height: 46px; flex: none; display: flex; align-items: center; gap: 34px; padding-left: 31px; }

.work { flex: 1; min-width: 0; display: flex; flex-direction: column; }
.stage { flex: 1; min-height: 0; display: flex; }
.canvas { position: relative; flex: 1; background: #212830; }
.viewctl { display: flex; align-items: center; height: 40px; padding-left: 32px; font: 600 24px/28px "Open Sans", sans-serif; color: #9b9d9c; }
.viewctl button { height: 28px; padding: 0 12px 2px 11px; border-left: 3px solid #8b8d8c; }
.viewctl .vplus { border: 0; padding: 0 23px 0 0; font-weight: 400; }
.cross { position: absolute; left: 32px; top: 282px; }
.model { position: absolute; left: 512px; top: 402px; }
.model g path { fill: none; vector-effect: non-scaling-stroke; shape-rendering: crispEdges; }
.edge { stroke: #fff; }
.semi { stroke: #8cc77d; }
.faint { stroke: #5fad48; }
.cube { position: absolute; right: 22px; top: 92px; }
.cardinal { fill: #b4b5b6; font-family: "Liberation Sans", sans-serif; font-weight: 700; }
.facename { fill: #4c5157; font-family: "Liberation Sans", sans-serif; font-weight: 700; }
.ucs { position: absolute; right: 84px; top: 324px; width: 143px; height: 24px; border-radius: 8px; background: #6b747b; color: #1f262e; font: 22px/24px "Liberation Sans", sans-serif; gap: 14px; }

.console { position: absolute; left: 50%; bottom: 0; width: 1000px; margin-left: -500px; }
.log { position: relative; margin-left: 80px; padding: 8px 10px 2px; background: #3c4453; font: 20px/30px "Noto Sans", sans-serif; color: #bcbec1; white-space: pre; }
.thumb { position: absolute; right: 11px; bottom: 4px; width: 8px; height: 40px; border-radius: 4px; background: #969a9f; }
.prompt { height: 50px; box-sizing: border-box; display: flex; align-items: center; background: #3c4453; padding: 0 20px 2px 17px; }
.prompt input { flex: 1; min-width: 0; margin-left: 27px; padding: 0; border: 0; outline: 0; background: none; color: #bcbec1; font: italic 22px/30px "Open Sans", sans-serif; }
.prompt input::placeholder { color: #a1a5ab; }
.prompt > .caret { margin-right: 23px; }

.dock { width: 45px; flex: none; padding: 2px 2px 3px 1px; display: flex; flex-direction: column; }
.dock .fold { flex: none; width: 46px; height: 44px; background: #3c4453; border-left: 0; }
.palette { flex: 1; background: #30343f; border-bottom: 2px solid #20272f; padding: 0 6px 4px 0; font-size: 24px; color: #cfd0d3; }
.palette span { writing-mode: vertical-rl; transform: rotate(180deg); }

.status { height: 44px; margin-top: 2px; margin-left: 2px; flex: none; display: flex; background: #3a4250; font: 22px/40px "Open Sans", sans-serif; color: #a9abaf; }
.status > button { border-right: 2px solid #212830; padding-bottom: 2px; }
.sheet { width: 118px; }
.sheet.on { width: 120px; background: #4b566b; color: #f4f4f4; font-weight: 600; }
.addsheet { width: 46px; }
.readout { margin-left: auto; display: flex; align-items: center; border-left: 2px solid #212830; padding-right: 10px; gap: 4px; font-family: Inter, sans-serif; }
.coords { width: 224px; padding-left: 10px; color: #b9babd; white-space: nowrap; }
.stat { width: 40px; height: 40px; }
.stat.on { background: #668dbd; }
.ratio { width: 52px; gap: 6px; }
</style>
